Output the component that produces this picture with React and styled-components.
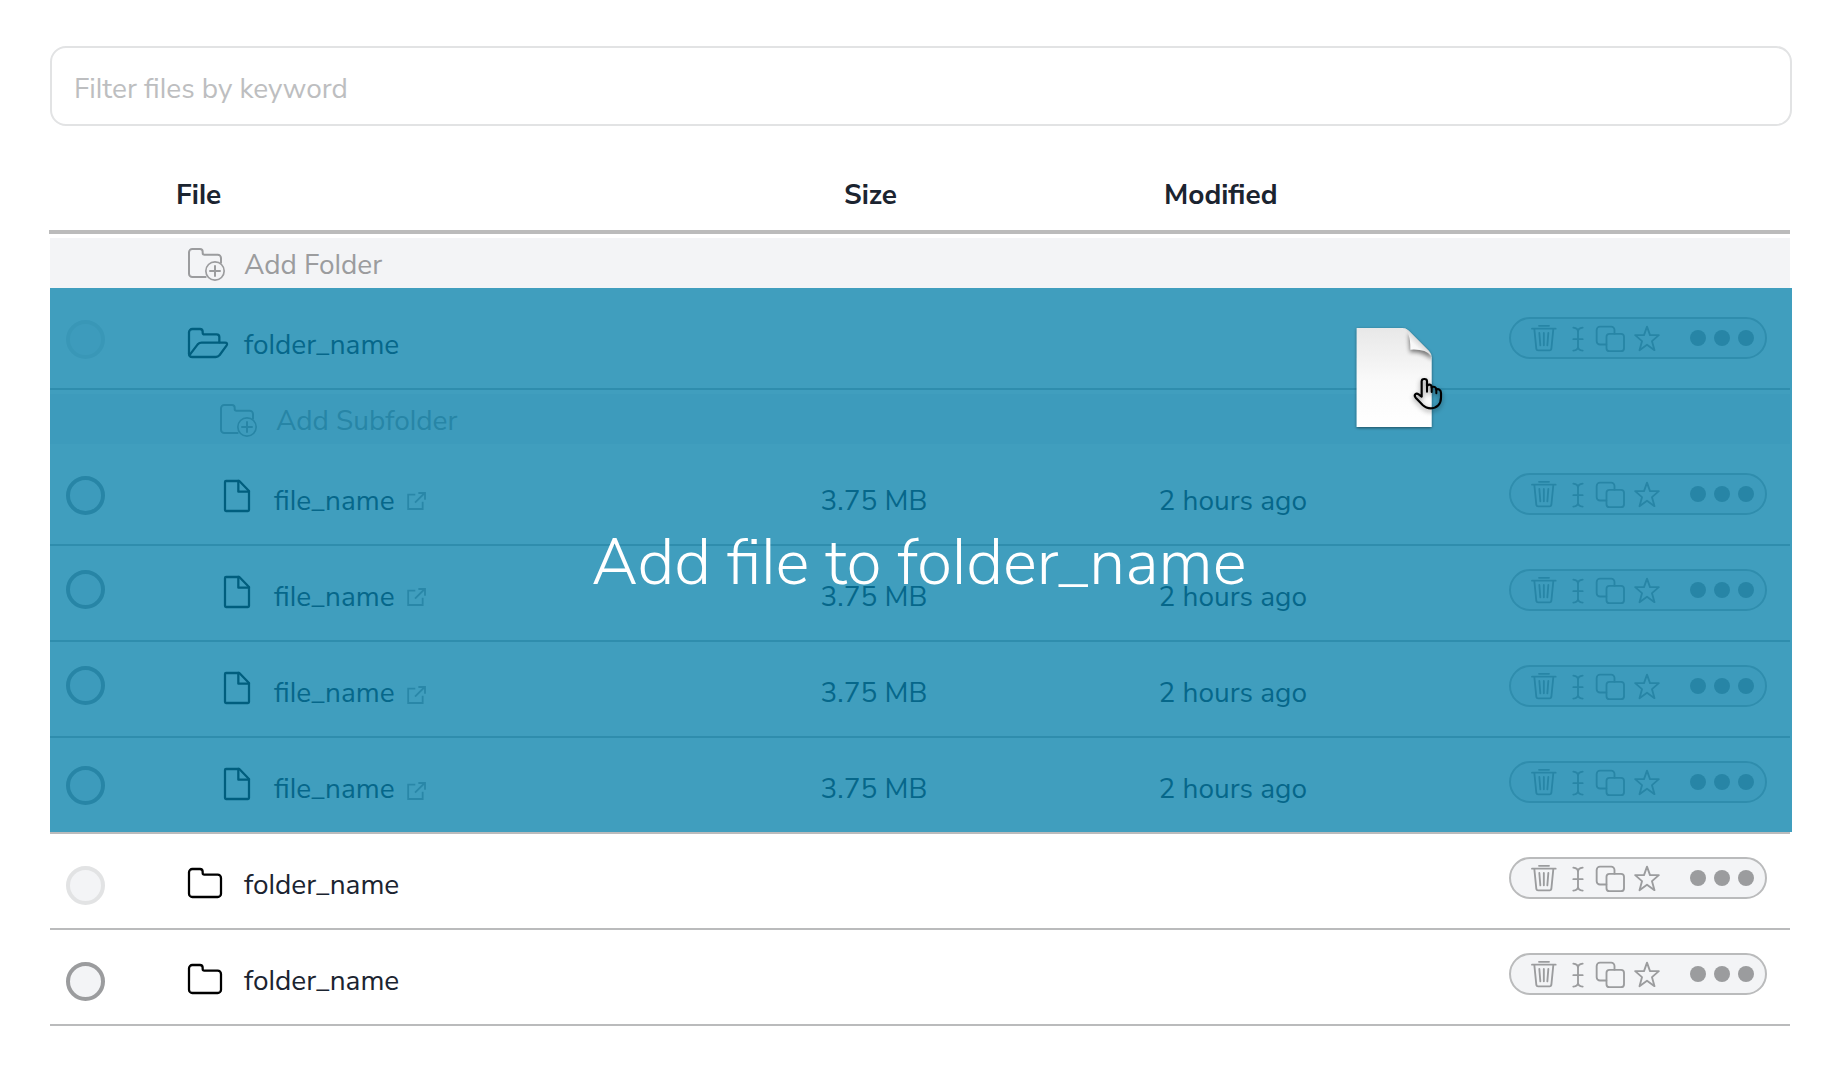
import React from "react";
import styled, { createGlobalStyle } from "styled-components";

const color = {
  ink: "#1b2430",
  muted: "#9b9c9e",
  line: "#babbbc",
  faint: "#e2e3e4",
  surface: "#f3f4f6",
  overlay: "rgba(0, 125, 168, 0.75)",
};

const GlobalStyle = createGlobalStyle`
  * { box-sizing: border-box; }
  body {
    margin: 0;
    background: #fff;
    color: ${color.ink};
    font-family: "Nunito Sans", Nunito, "Open Sans", sans-serif;
    font-size: 28px;
    line-height: 38px;
    /* ss02 selects the straight, tailless "l" */
    font-feature-settings: "ss02" 1;
  }
`;

const Page = styled.main`
  width: 1840px;
  height: 1080px;
  padding: 46px 48px 0 50px;
  overflow: hidden;
`;

const FilterInput = styled.input`
  display: block;
  width: 1742px;
  height: 80px;
  padding: 6px 22px 0;
  border: 2px solid ${color.faint};
  border-radius: 16px;
  background: #fff;
  font: inherit;
  font-feature-settings: "ss02" 1;
  outline: none;

  &::placeholder {
    color: #bdbec0;
    opacity: 1;
  }
`;

const Table = styled.section`
  display: flex;
  flex-direction: column;
  width: 1740px;
`;

const TableHead = styled.header`
  display: grid;
  grid-template-columns: 127px 644px 338px 350px 1fr;
  height: 108px;
  margin-left: -1px;
  padding-top: 50px;
  border-bottom: 4px solid #bbb;
  font-weight: 700;
`;

const HeadCell = styled.div`
  padding-left: ${(p) => p.$indent}px;
`;

const Row = styled.div`
  display: grid;
  grid-template-columns: 138px 632.5px 338px 350.5px 1fr;
  align-items: start;
  height: 96px;
  border-bottom: 2px solid ${color.line};
`;

const Checkbox = styled.span`
  width: 39px;
  height: 39px;
  margin: ${(p) => p.$top}px 0 0 16px;
  border: 4px solid ${(p) => (p.$disabled ? color.faint : color.muted)};
  border-radius: 50%;
  background: ${color.surface};
`;

const NameCell = styled.div`
  display: flex;
  align-items: flex-start;
  padding-left: ${(p) => (p.$nested ? 36 : 0)}px;
`;

const IconSlot = styled.span`
  display: flex;
  width: ${(p) => (p.$nested ? 50 : 56)}px;
  padding-top: ${(p) => p.$top}px;
`;

const Label = styled.span`
  padding-top: 32px;
  white-space: nowrap;
`;

const LinkSlot = styled.span`
  display: flex;
  padding: ${(p) => p.$top}px 0 0 12.3px;
`;

const Cell = styled.div`
  padding-top: 32px;
`;

const Pill = styled.div`
  display: flex;
  align-items: center;
  width: 258px;
  height: 42px;
  margin-top: 23px;
  padding-left: 20px;
  border: 2px solid ${color.line};
  border-radius: 21px;
  background: ${color.surface};
  color: ${color.muted};
`;

const PillIcon = styled.svg`
  flex: none;
  width: ${(p) => p.$w}px;
  height: 28px;
  margin-right: ${(p) => p.$gap}px;
  fill: none;
  stroke: currentColor;
  stroke-width: 5.6;
  stroke-linecap: round;
  stroke-linejoin: round;
`;

const Dots = styled.div`
  display: flex;
  gap: 8px;
`;

const Dot = styled.span`
  width: 16px;
  height: 16px;
  border-radius: 50%;
  background: currentColor;
`;

const AddRow = styled.div`
  display: flex;
  align-items: flex-start;
  height: 50px;
  margin: 4px 0 6px;
  padding-left: ${(p) => (p.$nested ? 170 : 138)}px;
  background: ${color.surface};
  color: ${color.muted};
`;

const AddIcon = styled.span`
  display: flex;
  width: 56px;
  padding-top: 10px;
`;

const AddLabel = styled.span`
  padding-top: 8px;
`;

const DropGroup = styled.div`
  position: relative;
  margin-top: -6px;
  padding-top: 6px;
`;

const DropOverlay = styled.div`
  position: absolute;
  inset: 0 -2px 2px 0;
  display: flex;
  align-items: center;
  justify-content: center;
  padding: 6px 4px 0 0;
  background: ${color.overlay};
  color: #fff;
  font-size: 64px;
  font-weight: 300;
  line-height: 88px;
  white-space: nowrap;
`;

const DraggedFile = styled.svg`
  position: absolute;
  left: 1280px;
  top: 12px;
  width: 140px;
  height: 150px;
`;

const Glyph = styled.svg`
  flex: none;
  display: block;
  overflow: visible;
  fill: none;
  stroke: currentColor;
  stroke-width: ${(p) => p.$stroke || 6.8};
  stroke-linecap: round;
  stroke-linejoin: round;
`;

const BlackGlyph = styled(Glyph)`
  color: #000;
`;

const LinkGlyph = styled(Glyph)`
  color: #a4a5a7;
  stroke-linecap: butt;
  stroke-linejoin: miter;
`;

const FolderIcon = () => (
  <BlackGlyph width="34" height="30" viewBox="474 174 102 90">
    <path d="M477 187a10 10 0 0 1 10-10h23a8 8 0 0 1 8 8v4q0 5 5 5h40a10 10 0 0 1 10 10v47a10 10 0 0 1-10 10h-76a10 10 0 0 1-10-10z" />
  </BlackGlyph>
);

const OpenFolderIcon = () => (
  <BlackGlyph width="40" height="30" viewBox="474 144 120 90">
    <path d="M477 221V157a10 10 0 0 1 10-10h23a8 8 0 0 1 8 8v3q0 5 5 5h37a8 8 0 0 1 8 8v16" />
    <path d="M478 226L503 193q5-5 12-5h70q9 0 5 8L569 225q-5 6-12 6h-70q-10 0-10-10" />
  </BlackGlyph>
);

const AddFolderIcon = () => (
  <Glyph width="37" height="33" viewBox="474 654 111 99" $stroke={6}>
    <path d="M527 741h-40a10 10 0 0 1-10-10V667a10 10 0 0 1 10-10h23a8 8 0 0 1 8 8v4q0 5 5 5h40a10 10 0 0 1 10 10v14" />
    <circle cx="555" cy="723" r="27.5" strokeWidth="5" />
    <path d="M540 723h30M555 708v30" />
  </Glyph>
);

const FileIcon = () => (
  <BlackGlyph width="26" height="32" viewBox="582 600 78 96">
    <path d="M588 603h40l29 30v57q0 3-3 3h-66q-3 0-3-3v-84q0-3 3-3z" />
    <path d="M625 603v32h32" />
  </BlackGlyph>
);

const ExternalIcon = () => (
  <LinkGlyph width="19" height="18" viewBox="1130 636 57 54" $stroke={5.5}>
    <path d="M1155 644h-21.500v43h43.500v-22M1154 668l29-29M1164 639h20v20" />
  </LinkGlyph>
);

const Actions = () => (
  <Pill>
    <PillIcon $w={26} $gap={15} viewBox="123 72 78 84">
      <path d="M126 86h71M147 77.500h30M133 87l6 60q1 4 5 4h35q4 0 5-4l6-60" />
      <path d="M148 99l3 37M161.500 99v37M175 99l-3 37" />
    </PillIcon>
    <PillIcon $w={12} $gap={11} viewBox="246 72 36 84">
      <path d="M250 83q14 2 14 12v45q0 10-14 12M278 83q-14 2-14 12M264 140q0 10 14 12M250 117.500h28" />
    </PillIcon>
    <PillIcon $w={30} $gap={9} viewBox="315 72 90 84">
      <path d="M349 133.500h-19a10 10 0 0 1-10-10V90a10 10 0 0 1 10-10h33.500a10 10 0 0 1 10 10v11" />
      <rect x="349.500" y="101.500" width="52.500" height="52" rx="9" />
    </PillIcon>
    <PillIcon $w={26} $gap={30} viewBox="432 72 78 84">
      <path d="M471 80l9 25.500h26.500l-20.500 18 7.500 27L471 134l-22.500 16.500 7.500-27-20.500-18H462z" />
    </PillIcon>
    <Dots>
      <Dot />
      <Dot />
      <Dot />
    </Dots>
  </Pill>
);

const FolderRow = ({ open, disabled, checkTop }) => (
  <Row>
    <Checkbox $top={checkTop} $disabled={disabled} />
    <NameCell>
      <IconSlot $top={34}>{open ? <OpenFolderIcon /> : <FolderIcon />}</IconSlot>
      <Label>folder_name</Label>
    </NameCell>
    <Cell />
    <Cell />
    <Actions />
  </Row>
);

const FileRow = ({ checkTop, linkTop }) => (
  <Row>
    <Checkbox $top={checkTop} />
    <NameCell $nested>
      <IconSlot $nested $top={30}>
        <FileIcon />
      </IconSlot>
      <Label>file_name</Label>
      <LinkSlot $top={linkTop}>
        <ExternalIcon />
      </LinkSlot>
    </NameCell>
    <Cell>3.75 MB</Cell>
    <Cell>2 hours ago</Cell>
    <Actions />
  </Row>
);

const DraggedFileWithPointer = () => (
  <DraggedFile viewBox="0 0 420 450">
    <defs>
      <linearGradient id="paper" x1="0" y1="0" x2="0" y2="1">
        <stop offset="0" stopColor="#e8e8e8" />
        <stop offset="0.55" stopColor="#fafafa" />
        <stop offset="1" stopColor="#fff" />
      </linearGradient>
      <linearGradient id="curl" x1="0.1" y1="0.9" x2="0.6" y2="0.4">
        <stop offset="0" stopColor="#fff" />
        <stop offset="0.6" stopColor="#f8f8f8" />
        <stop offset="1" stopColor="#d0d0d0" />
      </linearGradient>
      <clipPath id="sheet">
        <path d="M80 84H218Q228 84 236 92L296 152Q305 161 305 172V381H80z" />
      </clipPath>
      <filter id="paperShadow" x="-20%" y="-20%" width="140%" height="140%">
        <feDropShadow dx="0" dy="3" stdDeviation="4" floodOpacity="0.5" />
      </filter>
      <filter id="soft" x="-50%" y="-50%" width="200%" height="200%">
        <feGaussianBlur stdDeviation="7" />
      </filter>
      <filter id="handShadow" x="-50%" y="-50%" width="200%" height="200%">
        <feDropShadow dx="0" dy="6" stdDeviation="8" floodOpacity="0.45" />
      </filter>
    </defs>
    <path
      d="M80 84H218Q228 84 236 92L296 152Q305 161 305 172V381H80z"
      fill="url(#paper)"
      filter="url(#paperShadow)"
    />
    <g clipPath="url(#sheet)">
      <path d="M236 100L240 157Q272 152 310 180L300 150z" fill="#000" opacity="0.5" filter="url(#soft)" />
    </g>
    <path d="M218 84Q242 92 241 149Q286 146 304 168Q303 159 296 152L236 92Q228 84 218 84z" fill="url(#curl)" />
    <g filter="url(#handShadow)" fill="none" stroke="#000" strokeLinejoin="round" strokeLinecap="round">
      <path
        d="M275 290V244Q275 237 283 237Q291 237 291 244V259Q293 253 299 254Q305 255 305 263Q308 259 314 261Q319 263 319 269Q323 266 328 269Q333 272 333 279V292Q333 308 325 316Q316 325 303 325Q288 325 278 315L257 293Q252 287 256 283Q260 279 266 283L275 290z"
        strokeWidth="6.5"
      />
      <path d="M291 258V275M305 263V276M319 269V280" strokeWidth="6" />
    </g>
  </DraggedFile>
);

export default function App() {
  return (
    <>
      <GlobalStyle />
      <Page>
        <FilterInput placeholder="Filter files by keyword" />
        <Table>
          <TableHead>
            <HeadCell $indent={0} />
            <HeadCell $indent={0}>File</HeadCell>
            <HeadCell $indent={24}>Size</HeadCell>
            <HeadCell $indent={6}>Modified</HeadCell>
          </TableHead>
          <AddRow>
            <AddIcon>
              <AddFolderIcon />
            </AddIcon>
            <AddLabel>Add Folder</AddLabel>
          </AddRow>
          <DropGroup>
            <FolderRow open disabled checkTop={26} />
            <AddRow $nested>
              <AddIcon>
                <AddFolderIcon />
              </AddIcon>
              <AddLabel>Add Subfolder</AddLabel>
            </AddRow>
            <FileRow checkTop={26} linkTop={42} />
            <FileRow checkTop={24} linkTop={42} />
            <FileRow checkTop={24} linkTop={44} />
            <FileRow checkTop={28} linkTop={44} />
            <DropOverlay>Add file to folder_name</DropOverlay>
            <DraggedFileWithPointer />
          </DropGroup>
          <FolderRow disabled checkTop={32} />
          <FolderRow checkTop={32} />
        </Table>
      </Page>
    </>
  );
}
